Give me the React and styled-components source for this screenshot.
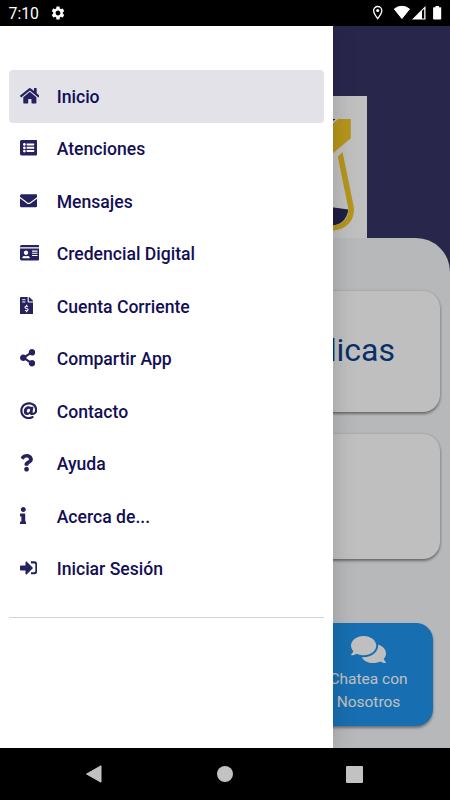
import styled, { createGlobalStyle } from 'styled-components'
import {
  FaAt,
  FaComments,
  FaEnvelope,
  FaFileInvoiceDollar,
  FaHome,
  FaIdCard,
  FaInfo,
  FaListAlt,
  FaQuestion,
  FaShareAlt,
  FaSignInAlt
} from 'react-icons/fa'
import { MdSettings } from 'react-icons/md'

// width is the glyph's own width for a 17.5px tall icon
const MENU_ITEMS = [
  { label: 'Inicio', Icon: FaHome, width: 19.7, active: true },
  { label: 'Atenciones', Icon: FaListAlt, width: 17.5 },
  { label: 'Mensajes', Icon: FaEnvelope, width: 17.5 },
  { label: 'Credencial Digital', Icon: FaIdCard, width: 19.7 },
  { label: 'Cuenta Corriente', Icon: FaFileInvoiceDollar, width: 13.1 },
  { label: 'Compartir App', Icon: FaShareAlt, width: 15.3 },
  { label: 'Contacto', Icon: FaAt, width: 17.5 },
  { label: 'Ayuda', Icon: FaQuestion, width: 13.1 },
  { label: 'Acerca de...', Icon: FaInfo, width: 6.6 },
  { label: 'Iniciar Sesión', Icon: FaSignInAlt, width: 17.5 }
]

const StatusIcons = () => (
  <svg width='70' height='16' viewBox='0 0 70 16'>
    <path
      d='M5.7 1.500a4.100 4.100 0 0 0-4.100 4.100c0 3 4.100 8 4.100 8s4.100-5 4.100-8a4.100 4.100 0 0 0-4.100-4.100z'
      fill='none'
      stroke='#fff'
      strokeWidth='1.3'
    />
    <circle cx='5.7' cy='5.6' r='1.5' fill='#fff' />
    <path d='M22.300 4a12 12 0 0 1 15.200 0L29.900 13.500z' fill='#fff' stroke='#fff' strokeLinejoin='round' />
    <path d='M40 14.500 53.500 1v13.500z' fill='#fff' />
    <path d='M50 6 52.200 3.800V13.500H50z' fill='#000' />
    <path d='M63.500 1h3.500v1.300h1.500q.7 0 .7.700V13.800q0 .7-.7.700h-6.700q-.7 0-.7-.7V3q0-.7.7-.7h1.700z' fill='#fff' />
  </svg>
)

const Flask = () => (
  <svg width='283' height='142' viewBox='84 96 283 142'>
    <path d='M314 119h7l-1 1zM330 119h5.500l-4 3z' fill='#1d1b4a' />
    <path d='M338 119h12.800v19.300L325 160v-29z' fill='#f1c727' />
    <path d='M312 206q18 0 36.300 3.500C347 220 340 225.500 331 225.500h-19z' fill='#2b2858' />
    <path
      d='M337.800 156.500 342.600 152 353.600 206C356 220 346 230.500 331 230.500h-19v-5h19C343 225.500 350 217 348 207z'
      fill='#f1c727'
    />
  </svg>
)

const App = () => (
  <Screen>
    <GlobalStyle />
    <StatusBar>
      <Clock>7:10</Clock>
      <MdSettings size={16} />
      <StatusIcons />
    </StatusBar>
    <Viewport>
      <Hero>
        <LogoBox><Flask /></LogoBox>
      </Hero>
      <Sheet>
        <Card $height='121px'>Médicas</Card>
        <Card $height='124.5px' />
        <ChatButton>
          <FaComments size={35} />
          <span>Chatea con Nosotros</span>
        </ChatButton>
      </Sheet>
      <Backdrop />
      <Drawer>
        <Menu>
          {MENU_ITEMS.map(({ label, Icon, width, active }) => (
            <MenuItem key={label} $active={active}>
              <IconSlot $width={width}><Icon preserveAspectRatio='none' /></IconSlot>
              {label}
            </MenuItem>
          ))}
        </Menu>
      </Drawer>
    </Viewport>
    <NavBar>
      <svg width='18' height='20' viewBox='0 0 18 20'>
        <path d='M1.500 10 16 1.800v16.400z' fill='#c2c2c2' stroke='#c2c2c2' strokeLinejoin='round' />
      </svg>
      <HomeKey />
      <RecentKey />
    </NavBar>
  </Screen>
)

const GlobalStyle = createGlobalStyle`
  * {
    box-sizing: border-box;
  }

  body {
    margin: 0;
    font-family: Roboto, sans-serif;
  }
`
const Screen = styled.div`
  width: 450px;
  height: 800px;
  display: flex;
  flex-direction: column;
  overflow: hidden;
  background: #000;
`
const StatusBar = styled.header`
  height: 26px;
  flex: none;
  display: flex;
  align-items: center;
  padding: 0 8px 0 8.500px;
  color: #fff;

  > svg:last-child {
    margin-left: auto;
  }
`
const Clock = styled.span`
  width: 41.500px;
  font-size: 15.800px;
  line-height: 26px;
  padding-top: 2px;
`
const Viewport = styled.main`
  position: relative;
  height: 722px;
  flex: none;
  overflow: hidden;
  background: #373366;
`
const Hero = styled.div`
  height: 212px;
  display: flex;
  align-items: flex-end;
  justify-content: center;
`
const LogoBox = styled.div`
  width: 283px;
  height: 142px;
  background: #fff;

  svg {
    display: block;
  }
`
const Sheet = styled.section`
  height: 510px;
  display: flex;
  flex-direction: column;
  gap: 22px;
  padding: 53px 10px 0;
  border-top-right-radius: 34px;
  border-top-left-radius: 34px;
  background: #f4f6f9;
`
const Card = styled.div`
  height: ${({ $height }) => $height};
  flex: none;
  display: flex;
  align-items: center;
  justify-content: flex-end;
  padding: 0 45px 3px 0;
  border-radius: 17px;
  background: #fff;
  box-shadow: 0 2px 3px rgba(0, 0, 0, 0.4), 0 0 3px rgba(0, 0, 0, 0.15);
  color: #0d3f8c;
  font-size: 32px;
  font-weight: 370;
`
const ChatButton = styled.button`
  width: 131px;
  height: 103px;
  align-self: flex-end;
  display: flex;
  flex-direction: column;
  align-items: center;
  margin: 42.500px 7px 0 0;
  padding: 8.500px 20px 0 22px;
  border: 0;
  border-radius: 17px;
  background: #1f94ec;
  box-shadow: 0 2px 3px rgba(0, 0, 0, 0.4);
  color: #fff;
  font: 400 15.500px/23px Roboto, sans-serif;

  span {
    padding-top: 1px;
  }
`
const Backdrop = styled.div`
  position: absolute;
  inset: 0;
  background: rgba(0, 0, 0, 0.25);
`
const Drawer = styled.aside`
  position: absolute;
  top: 0;
  bottom: 0;
  left: 0;
  width: 332.5px;
  padding: 44px 8.700px 0;
  background: #fff;
  box-shadow: 0 0 22px rgba(0, 0, 0, 0.18);
`
const Menu = styled.nav`
  display: flex;
  flex-direction: column;
  padding-bottom: 21.500px;
  border-bottom: 1.400px solid #d3d3d5;
`
const MenuItem = styled.a`
  height: 52.500px;
  display: flex;
  align-items: center;
  padding: 0.500px 0 0 11px;
  border-radius: 4px;
  background: ${({ $active }) => $active ? '#e2e2e8' : 'transparent'};
  color: #130f55;
  font-size: 17.600px;
  font-weight: 470;
`
const IconSlot = styled.span`
  width: 37px;
  display: flex;
  padding-bottom: 2px;
  color: #25225f;

  svg {
    width: ${({ $width }) => $width}px;
    height: 17.500px;
  }
`
const NavBar = styled.footer`
  flex: 1;
  display: flex;
  align-items: center;
  justify-content: space-between;
  padding: 0 87px 0 85px;
`
const HomeKey = styled.span`
  width: 16px;
  height: 16px;
  border-radius: 50%;
  background: #c2c2c2;
`
const RecentKey = styled.span`
  width: 17px;
  height: 17px;
  border-radius: 1px;
  background: #c2c2c2;
`
export default App
